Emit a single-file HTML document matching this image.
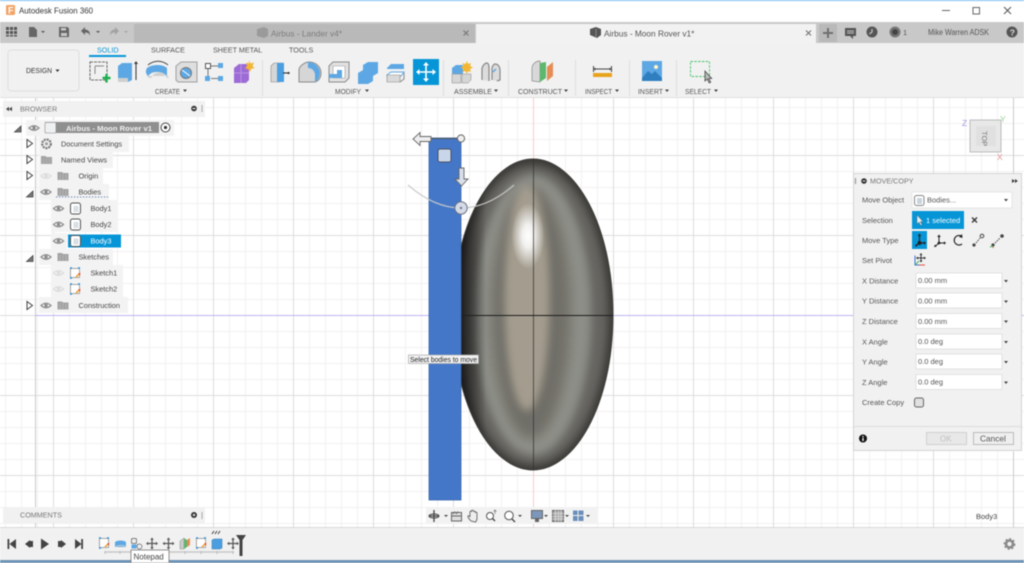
<!DOCTYPE html>
<html><head><meta charset="utf-8"><title>Autodesk Fusion 360</title>
<style>
html,body{margin:0;padding:0;background:#fff;width:1024px;height:563px;overflow:hidden}
svg{display:block;filter:blur(.4px)}
text{font-family:"Liberation Sans",sans-serif;font-size:8px;fill:#555}
</style></head><body>
<svg width="1024" height="563" viewBox="0 0 1024 563" xmlns="http://www.w3.org/2000/svg">
<defs>
<pattern id="minor" x="5" y="11" width="16" height="16" patternUnits="userSpaceOnUse"><path d="M.5 0V16M0 .5H16" stroke="#f3f0f2" fill="none"/></pattern>
<pattern id="major" x="53" y="75" width="80" height="80" patternUnits="userSpaceOnUse"><path d="M.5 0V80M0 .5H80" stroke="#dfdddf" fill="none"/></pattern>
<filter id="b4" x="-30%" y="-30%" width="160%" height="160%"><feGaussianBlur stdDeviation="4"/></filter>
<linearGradient id="eggL" x1="461" x2="486" y1="0" y2="0" gradientUnits="userSpaceOnUse"><stop offset="0" stop-color="#111" stop-opacity=".85"/><stop offset=".5" stop-color="#222" stop-opacity=".55"/><stop offset="1" stop-color="#222" stop-opacity="0"/></linearGradient>
<radialGradient id="hi" cx="528" cy="236" r="30" gradientUnits="userSpaceOnUse" gradientTransform="translate(528 236) scale(.55 1.1) translate(-528 -236)"><stop offset="0" stop-color="#fff"/><stop offset=".35" stop-color="#fff" stop-opacity=".85"/><stop offset="1" stop-color="#fff" stop-opacity="0"/></radialGradient>
<clipPath id="eggClip"><path id="eggP" d="M533 159C575 159 613 225 613 315C613 405 575 470 533 470C491 470 453 405 453 315C453 225 491 159 533 159Z"/></clipPath>
<g id="eye"><path d="M-5 0Q0-4.500 5 0Q0 4.500-5 0Z" fill="none" stroke="#8c8c8c" stroke-width="1.200"/><circle r="1.700" fill="#8c8c8c"/></g>
<g id="eyeoff"><path d="M-5 0Q0-4.500 5 0Q0 4.500-5 0Z" fill="none" stroke="#dcdcdc" stroke-width="1.200"/><circle r="1.700" fill="#dcdcdc"/></g>
<g id="folder"><path d="M-5.500-4H-1L0-3H5.500V4H-5.500Z" fill="#a3a3a3"/><path d="M-3-2V4M0-2V4M3-2V4" stroke="#c2c2c2" stroke-width=".5"/></g>
<g id="body"><rect x="-5" y="-5.500" width="10" height="11" rx="2" fill="#fff" stroke="#555" stroke-width="1"/><rect x="-2" y="-2.500" width="5" height="6" fill="#d9dfe3"/></g>
<g id="sk"><rect x="-4.500" y="-4.500" width="9" height="9" fill="#fff" stroke="#555" stroke-width=".5"/><path d="M-5-5h2M3-5h2M-5 5h2" stroke="#2e90d8" stroke-width="1.400"/><path d="M1 4L4.500 .5" stroke="#f0a030" stroke-width="1.500"/><circle cx="4.500" cy="1" r="1" fill="#e8502f"/></g>
<g id="mv"><path d="M0-5V5M-5 0H5" stroke="#555" stroke-width="1.200"/><path d="M0-6l-1.800 2.200h3.600zM0 6l-1.800-2.200h3.600zM-6 0l2.200-1.800v3.600zM6 0l-2.200-1.800v3.600z" fill="#555"/></g>
</defs>

<!-- title bar -->
<rect width="1024" height="22" fill="#fff"/>
<rect width="1024" height="1" fill="#79bdf0"/>
<rect x="6" y="5" width="9" height="10" rx="1" fill="#f2a365"/><text x="8" y="13.500" style="font-size:9px;font-weight:bold;fill:#fff">F</text>
<text x="19" y="13.500" textLength="74" lengthAdjust="spacingAndGlyphs" style="font-size:8.300px;fill:#333">Autodesk Fusion 360</text>
<path d="M942 10.500h8" stroke="#666"/><rect x="973" y="7.500" width="6.500" height="6.500" fill="none" stroke="#666"/><path d="M1004 7l7 7M1011 7l-7 7" stroke="#555"/>

<!-- tab bar -->
<rect y="22" width="1024" height="21" fill="#c8c8c8"/>
<rect x="134" y="24" width="341" height="19" fill="#b9b9b9"/>
<rect x="476" y="24" width="340" height="20" fill="#f2f2f2"/>
<rect x="819" y="24" width="18" height="18" fill="#b9b9b9"/>
<g fill="#555">
<path d="M6 27h3v3H6zM10 27h3v3h-3zM14 27h3v3h-3zM6 31h3v3H6zM10 31h3v3h-3zM14 31h3v3h-3zM6 35h3v1.500H6zM10 35h3v1.500h-3zM14 35h3v1.500h-3z"/>
<path d="M29 27h5l3 3v7h-8z" fill="#666"/><path d="M41 31h4l-2 2z"/>
<path d="M59 27h8.500l1.500 1.500V37H59z" fill="#666"/><rect x="61" y="28" width="5" height="2.500" fill="#c8c8c8"/><rect x="61" y="33" width="6" height="3" fill="#c8c8c8"/>
<path d="M85 27l-4 4 4 4v-2.500c3 0 4.500 1 5 3.500 .3-4-1.500-6.500-5-6.500z" fill="#666"/><path d="M96 31h4l-2 2z"/>
<path d="M115 27l4 4-4 4v-2.500c-3 0-4.500 1-5 3.500-.3-4 1.500-6.500 5-6.500z" fill="#a3a3a3"/><path d="M124 31h4l-2 2z" fill="#a3a3a3"/>
</g>
<path d="M257 29l7-2 4 2v7l-4 2-7-2z" fill="#9a9a9a"/><text x="271" y="36.500" style="font-size:8.300px;fill:#7d7d7d">Airbus - Lander v4*</text>
<path d="M463.500 30.500l5 5M468.500 30.500l-5 5" stroke="#777" stroke-width="1.200"/>
<path d="M590 29l6-2 5 2v6l-4 3-7-3z" fill="#555"/><path d="M596 29v8" stroke="#888"/>
<text x="604" y="36.500" style="font-size:8.300px;fill:#555">Airbus - Moon Rover v1*</text>
<path d="M806 30.500l5 5M811 30.500l-5 5" stroke="#777" stroke-width="1.200"/>
<path d="M828 28v10M823 33h10" stroke="#707070" stroke-width="2"/>
<path d="M845 28h11v8h-3v3l-3-3h-5z" fill="#555"/><path d="M847 31h7M847 33h7" stroke="#c8c8c8"/>
<circle cx="872" cy="32" r="5.500" fill="#555"/><path d="M872 29v3l-2.500 2" stroke="#c8c8c8" fill="none" stroke-width="1.200"/>
<circle cx="895" cy="32" r="5.500" fill="#777"/><circle cx="895" cy="32" r="3" fill="#444"/>
<text x="903" y="35" style="font-size:7.500px;fill:#555">1</text>
<text x="928" y="35" textLength="61" lengthAdjust="spacingAndGlyphs" style="font-size:7.800px;fill:#555">Mike Warren ADSK</text>
<circle cx="1012" cy="32" r="5.500" fill="#555"/><text x="1009.800" y="35.500" style="font-size:8.500px;font-weight:bold;fill:#ddd">?</text>

<!-- ribbon -->
<rect y="43" width="1024" height="55" fill="#f1f1f1"/>
<rect y="97" width="1024" height="1" fill="#e0e0e0"/>
<rect x="8" y="50" width="71" height="41" rx="3" fill="#f1f1f1" stroke="#dedede"/>
<text x="26" y="73" textLength="26" lengthAdjust="spacingAndGlyphs" style="font-size:7.300px;fill:#333">DESIGN</text><path d="M55.500 69.500h4l-2 2.500z" fill="#333"/>
<text x="97" y="52.500" style="font-size:7.200px;fill:#0696d7">SOLID</text><rect x="89" y="55" width="37" height="2" fill="#0696d7"/>
<text x="151" y="52.500" style="font-size:7.200px">SURFACE</text>
<text x="213" y="52.500" style="font-size:7.200px">SHEET METAL</text>
<text x="289" y="52.500" style="font-size:7.200px">TOOLS</text>
<text x="155" y="94" textLength="25" lengthAdjust="spacingAndGlyphs" style="font-size:7.200px">CREATE</text><path d="M183 89.500h4l-2 2.500z" fill="#444"/>
<text x="335" y="94" textLength="26" lengthAdjust="spacingAndGlyphs" style="font-size:7.200px">MODIFY</text><path d="M365 89.500h4l-2 2.500z" fill="#444"/>
<text x="454" y="94" textLength="38" lengthAdjust="spacingAndGlyphs" style="font-size:7.200px">ASSEMBLE</text><path d="M494 89.500h4l-2 2.500z" fill="#444"/>
<text x="518" y="94" textLength="44" lengthAdjust="spacingAndGlyphs" style="font-size:7.200px">CONSTRUCT</text><path d="M564 89.500h4l-2 2.500z" fill="#444"/>
<text x="585" y="94" textLength="27" lengthAdjust="spacingAndGlyphs" style="font-size:7.200px">INSPECT</text><path d="M615 89.500h4l-2 2.500z" fill="#444"/>
<text x="638" y="94" textLength="25" lengthAdjust="spacingAndGlyphs" style="font-size:7.200px">INSERT</text><path d="M665 89.500h4l-2 2.500z" fill="#444"/>
<text x="685" y="94" textLength="26" lengthAdjust="spacingAndGlyphs" style="font-size:7.200px">SELECT</text><path d="M714 89.500h4l-2 2.500z" fill="#444"/>
<path d="M262.500 60V96M443.500 60V96M508.500 60V96M575.500 60V96M629.500 60V96M676.500 60V96" stroke="#dedede"/>
<!-- create icons -->
<rect x="90" y="62" width="17" height="18" fill="none" stroke="#444" stroke-width=".8" stroke-dasharray="3 1"/>
<path d="M95 66h9M95 66v8" stroke="#888"/><path d="M102.500 78h8M106.500 74v8.500" stroke="#1cae4f" stroke-width="2.400"/>
<path d="M118 66l4-3h10v17l-4 2h-10z" fill="#5da8e4"/><path d="M118 78h10v4h-10z" fill="#cfcfcf"/><path d="M136 80V62m-1.500 2l1.500-2 1.500 2" stroke="#333" fill="none"/>
<path d="M147 68c5-4 16-4 20 0v8c-2-1-3-4-10-4s-7 3-9 4c-2-2-3-5-1-8z" fill="#5da8e4"/><path d="M147 76c1 2 3 2 4 2l3-4c2-2 8-2 10 0l3 4c2 0 1.500-1 1.500-2" fill="#d0d0d0"/><path d="M148 65c6-5 14-5 20 0" stroke="#444" fill="none"/>
<path d="M176 66l5-4h16v20h-19l-2-2z" fill="#dedede" stroke="#a0a0a0"/><circle cx="186" cy="73" r="5.500" fill="#5da8e4" stroke="#777"/><path d="M182 70l8 6" stroke="#fff"/>
<rect x="205.500" y="63.500" width="5" height="5" fill="#fff" stroke="#555"/><rect x="218" y="63" width="5" height="5" fill="#5da8e4"/><rect x="205" y="76" width="5" height="5" fill="#5da8e4"/><rect x="218" y="76" width="5" height="5" fill="#5da8e4"/><path d="M211 66h7M208 69v7M211 78.500h7" stroke="#777"/>
<path d="M234 68l5-4h10v16l-3 3h-12z" fill="#9d6bd6"/><path d="M234 73h15M241 64v19" stroke="#b892e6" stroke-width="1"/><path d="M249 60l1.500 3.500 3.500-1-1.500 3.500 2 2-3.500 1-1 3-2-3-3-.5 2-2.500-1-3.500 3 1z" fill="#f2b632"/>
<!-- modify -->
<path d="M271 66l3-3h9v16l-3 3h-9z" fill="#d6d6d6" stroke="#888" stroke-width=".6"/><path d="M277 63h7v19h-7z" fill="#4b9ee0"/><path d="M283 73h5" stroke="#222"/><path d="M288 71.500l2 1.500-2 1.500z" fill="#222"/>
<path d="M299 82V70c0-4 6-8 10-8 7 0 12 5 12 11s-4 9-7 9z" fill="#d6d6d6" stroke="#8a8a8a"/><path d="M308 62c6 0 12 5 12 11 0 4-2 7-5 9v-7c0-4-3-7-7-7z" fill="#5da8e4"/>
<path d="M329 66l4-4h16v16l-4 4h-16z" fill="#e2e2e2" stroke="#8a8a8a"/><path d="M333 66h12v12h-12z" fill="#fff" stroke="#999" stroke-width=".6"/><path d="M329 74h8v-4h5v8h-13z" fill="#5da8e4"/>
<path d="M358 73l5-3v-5l5-3h10v11l-5 3v5l-5 3h-10z" fill="#5da8e4"/>
<path d="M387 68l4-4h13v5h-17z" fill="#5da8e4"/><path d="M387 75l4-3h13l-3 4h-14z" fill="#fff" stroke="#5da8e4"/><path d="M387 75h13v7h-13z" fill="#d9d9d9" stroke="#888" stroke-width=".6"/><path d="M400 82l4-3v-6" fill="none" stroke="#888"/>
<rect x="413" y="59" width="26" height="26" fill="#0696d7"/><path d="M426 63V81M417 72H435" stroke="#fff" stroke-width="1.600"/><path d="M426 62l-3 3.500h6zM426 82l-3-3.500h6zM416 72l3.500-3v6zM436 72l-3.500-3v6z" fill="#fff"/>
<!-- assemble -->
<path d="M452 68l4-3h7v9h-11z" fill="#5da8e4"/><path d="M452 74h9v9h-9zM462 74h9v6l-3 3h-6z" fill="#d6d6d6" stroke="#888" stroke-width=".5"/><path d="M467 61l1 3 3-1-1 3 3 1.500-3 1.500 1 3-3-1-1 3-1.500-3-3 1 1-3-3-1.500 3-1.500-1-3 3 1z" fill="#f2b632"/>
<path d="M482 80V69c0-3 3-6 5-6 1 0 2 2 2 4v14M492 80V69c0-3 2-5 3-5 3 0 5 3 5 6v10l-3 1" fill="#dcdcdc" stroke="#888" stroke-width="1.200"/><path d="M493 72l3-3" stroke="#5da8e4" stroke-width="1.500"/>
<!-- construct -->
<path d="M532 81V68c0-3 3-7 8-7v21z" fill="#d8d8d8" stroke="#888" stroke-width=".7"/><path d="M540 63l6-1v16l-6 4z" fill="#5cb86c"/><path d="M547 67l6-5v14l-6 5z" fill="#e58d55"/>
<!-- inspect -->
<rect x="593" y="73" width="19" height="4" fill="#e8a31d"/><path d="M593.500 66v6M611.500 66v6M594 69H611" stroke="#444"/><path d="M593.500 69l2-1.500v3zM611.500 69l-2-1.500v3z" fill="#444"/>
<!-- insert -->
<rect x="642" y="61" width="20" height="20" fill="#5da8e4"/><path d="M642 78l6-7 4 3 3-3 7 7v3h-20z" fill="#2f7fc0"/><circle cx="656" cy="67" r="2" fill="#fff6c9"/>
<!-- select -->
<rect x="690.500" y="61.500" width="19" height="15" fill="none" stroke="#46c46a" stroke-width=".9" stroke-dasharray="2.500 1.300"/>
<path d="M705 71v10l2.200-2 2 4 1.500-.8-2-3.700 3 0z" fill="#bbb" stroke="#444" stroke-width=".8"/>

<!-- canvas -->
<rect y="98" width="1024" height="429" fill="#fff"/>
<rect y="98" width="1024" height="429" fill="url(#minor)"/>
<rect y="98" width="1024" height="429" fill="url(#major)"/>
<path d="M35.500 98V527" stroke="#c8c8c8"/>
<path d="M533.500 98V527" stroke="#f8cccc"/>
<path d="M35 315.500H1024" stroke="#bdb4f2"/>
<path d="M1013.500 98V173M1013.500 452V527" stroke="#cccccc"/>

<!-- egg -->
<g clip-path="url(#eggClip)">
<rect x="450" y="155" width="170" height="320" fill="#3a3936"/>
<g filter="url(#b4)">
<ellipse cx="533" cy="315" rx="75" ry="150" fill="#666560"/>
<ellipse cx="533" cy="315" rx="58" ry="140" fill="#8d8e87"/>
<ellipse cx="531" cy="313" rx="42" ry="128" fill="#7c7a72"/>
<ellipse cx="531" cy="313" rx="34" ry="120" fill="#706e67"/>
<ellipse cx="527" cy="298" rx="22" ry="112" fill="#a49d8f"/>
</g>
<rect x="450" y="155" width="40" height="320" fill="url(#eggL)"/>
<rect x="490" y="190" width="80" height="100" fill="url(#hi)"/>
</g>
<use href="#eggP" fill="none" stroke="#3e3e3a" stroke-width=".9"/>
<path d="M533.500 159V470" stroke="#333" stroke-width="1" opacity=".75"/>
<path d="M461 315.500H613" stroke="#1e1e1e" stroke-width="1"/>

<!-- blue body -->
<rect x="429" y="138" width="32" height="362" fill="#4477c8"/>
<rect x="429" y="138" width="32" height="362" fill="none" stroke="#3a66ad" stroke-width=".8"/>
<!-- manipulators -->
<path d="M408 185Q461 231 514 185" fill="none" stroke="#c9c9c9" stroke-width="1.300" opacity=".9"/>
<rect x="438" y="149" width="13" height="13" rx="2" fill="#c9d6ea" stroke="#4a4f63"/>
<path d="M429 138.500h32" stroke="#555"/>
<path d="M431 136.500h-11v-4l-7 6.500 7 6.500v-4h11z" fill="#eee" stroke="#666" stroke-width=".9"/>
<circle cx="461" cy="138.500" r="3.600" fill="#eee" stroke="#666"/>
<path d="M459 168v11h-4l6.500 7 6.500-7h-4v-11z" fill="#d8deea" stroke="#666" stroke-width=".9"/>
<circle cx="461" cy="208" r="6.200" fill="#d4dbe7" stroke="#6a6f80"/><circle cx="461" cy="208" r="1.200" fill="#778"/>
<rect x="408.500" y="355" width="70" height="8.500" fill="#f3f3f3" stroke="#aaa" stroke-width=".7"/>
<text x="410" y="362" textLength="67" lengthAdjust="spacingAndGlyphs" style="font-size:7px;fill:#222">Select bodies to move</text>

<!-- viewcube -->
<rect x="970" y="120" width="31" height="32" fill="#e8e8e8" stroke="#bcbcbc"/><rect x="976" y="126" width="20" height="20" fill="#e0e0e0"/>
<text transform="translate(982 131) rotate(90)" style="font-size:7.500px;fill:#777">TOP</text>
<text x="962" y="126" style="font-size:8.500px;fill:#9a96e8">Z</text><text x="1000" y="122" style="font-size:8.500px;fill:#9ad49a">Y</text><text x="997" y="160" style="font-size:8.500px;fill:#e58f8f">X</text>

<!-- browser -->
<rect x="3" y="101" width="202" height="16" fill="#f1f1f1"/>
<path d="M6 109l3-2.200v4.400zM9 109l3-2.200v4.400z" fill="#444"/><text x="20" y="111.500" style="font-size:7.200px;fill:#777">BROWSER</text>
<circle cx="194" cy="108.500" r="2.800" fill="#333"/><rect x="192.500" y="108" width="3" height="1" fill="#fff"/><path d="M202 105v7" stroke="#aaa"/>
<g fill="#f3f3f3">
<rect x="26" y="120" width="148" height="16"/><rect x="39" y="136" width="90" height="16"/><rect x="39" y="152" width="74" height="16"/><rect x="39" y="168" width="64" height="16"/><rect x="39" y="184" width="70" height="16"/>
<rect x="51" y="200" width="67" height="16"/><rect x="51" y="216" width="67" height="16"/><rect x="51" y="233" width="16" height="16"/>
<rect x="39" y="249" width="74" height="16"/><rect x="51" y="265" width="72" height="16"/><rect x="51" y="281" width="72" height="16"/><rect x="39" y="297" width="89" height="16"/>
</g>
<!-- tree arrows -->
<g fill="#fff" stroke="#444" stroke-width="1">
<path d="M27 139.500v8l5.500-4z"/><path d="M27 155.500v8l5.500-4z"/><path d="M27 171.500v8l5.500-4z"/><path d="M27 301.500v8l5.500-4z"/>
</g>
<g fill="#777" stroke="#444" stroke-width=".8">
<path d="M14.500 132l6.500-6v6z"/><path d="M26.500 197l6.500-6v6z"/><path d="M26.500 261.500l6.500-6v6z"/>
</g>
<use href="#eye" x="34" y="128"/>
<rect x="45" y="122" width="114" height="11" fill="#8f8f8f"/>
<rect x="45" y="122.500" width="11" height="10.500" rx="1" fill="#eef0f2" stroke="#888" stroke-width=".6"/>
<text x="66" y="130.800" textLength="86" lengthAdjust="spacingAndGlyphs" style="font-size:7.600px;font-weight:bold;fill:#f0f0f0">Airbus - Moon Rover v1</text>
<circle cx="165.500" cy="127.500" r="4.500" fill="#fff" stroke="#444"/><circle cx="165.500" cy="127.500" r="1.600" fill="#333"/>
<circle cx="46.500" cy="143.800" r="4.300" fill="none" stroke="#777" stroke-width="2.200" stroke-dasharray="2 .9"/><circle cx="46.500" cy="143.800" r="1.500" fill="#999"/>
<use href="#folder" x="46.500" y="160"/>
<use href="#eyeoff" x="46" y="176"/><use href="#folder" x="63" y="176"/>
<use href="#eye" x="46" y="192"/><use href="#folder" x="63" y="192"/>
<path d="M56 197H108" stroke="#5a78b4" stroke-width="1.100" stroke-dasharray="1.200 1.800"/>
<use href="#eye" x="58.500" y="208.500"/><use href="#body" x="75.500" y="208.500"/>
<use href="#eye" x="58.500" y="224.500"/><use href="#body" x="75.500" y="224.500"/>
<use href="#eye" x="58.500" y="241"/><rect x="68" y="234.500" width="53" height="13" fill="#0696d7"/><use href="#body" x="75.500" y="241"/>
<use href="#eye" x="46" y="257"/><use href="#folder" x="63" y="257"/>
<use href="#eyeoff" x="58.500" y="273"/><use href="#sk" x="75" y="273"/>
<use href="#eyeoff" x="58.500" y="289"/><use href="#sk" x="75" y="289"/>
<use href="#eye" x="46" y="305.500"/><use href="#folder" x="63" y="305.500"/>
<text x="61" y="146.500" textLength="61" lengthAdjust="spacingAndGlyphs" style="font-size:7.400px;fill:#444">Document Settings</text>
<text x="61" y="162.500" textLength="46" lengthAdjust="spacingAndGlyphs" style="font-size:7.400px;fill:#444">Named Views</text>
<text x="78.500" y="178.500" style="font-size:7.400px;fill:#444">Origin</text>
<text x="78.500" y="194.500" style="font-size:7.400px;fill:#444">Bodies</text>
<text x="90.500" y="211" style="font-size:7.400px;fill:#444">Body1</text>
<text x="90.500" y="227" style="font-size:7.400px;fill:#444">Body2</text>
<text x="90.500" y="243.500" style="font-size:7.400px;fill:#fff">Body3</text>
<text x="78.500" y="259.500" style="font-size:7.400px;fill:#444">Sketches</text>
<text x="90.500" y="275.500" style="font-size:7.400px;fill:#444">Sketch1</text>
<text x="90.500" y="291.500" style="font-size:7.400px;fill:#444">Sketch2</text>
<text x="78.500" y="308" style="font-size:7.400px;fill:#444">Construction</text>

<!-- comments -->
<rect x="3" y="507" width="202" height="16" fill="#f1f1f1"/>
<text x="20" y="517.500" style="font-size:7.200px;fill:#777">COMMENTS</text>
<circle cx="194" cy="515" r="3" fill="#333"/><path d="M192.500 515h3M194 513.500v3" stroke="#fff" stroke-width=".7"/><path d="M202 512v7" stroke="#aaa"/>

<!-- nav bar -->
<rect x="426" y="507" width="172" height="17" fill="#f2f2f2"/>
<g fill="#666" stroke="none">
<path d="M434 510v12M429 516h10" stroke="#444" stroke-width="1.300"/><ellipse cx="434" cy="516" rx="5" ry="2" fill="none" stroke="#444"/>
<path d="M444 515h4l-2 2z" fill="#444"/>
<rect x="451.500" y="512.500" width="10" height="8.500" fill="#ddd" stroke="#666"/><path d="M453 514l2-2.500M456 514l2-2.500M451.500 516h10" stroke="#666" fill="none"/>
<path d="M471 521c-2-2-3.500-4-3-5 .5-.8 1.500 0 2 1v-5c0-1.200 1.500-1.200 1.500 0v-1c0-1.200 2-1.200 2 0v1c0-1 2-1 2 0v1c0-1 1.500-1 1.500 0V518c0 2-.5 3-1.500 4z" fill="#eee" stroke="#555" stroke-width=".8"/>
<circle cx="490" cy="516" r="3.500" fill="#fff" stroke="#555"/><path d="M492.500 518.500l2.500 2.500" stroke="#444" stroke-width="1.300"/><path d="M495 510v4M493.500 511.500l1.500-1.500 1.500 1.500" stroke="#777" fill="none" stroke-width=".7"/>
<circle cx="509" cy="515.500" r="4.300" fill="#fff" stroke="#555"/><path d="M512 519l3 3" stroke="#444" stroke-width="1.300"/>
<path d="M518 515h4l-2 2z" fill="#444"/>
<rect x="531.500" y="510.500" width="11" height="8" fill="#7d97ba" stroke="#666"/><rect x="535" y="519" width="4" height="3" fill="#666"/>
<path d="M544 515h4l-2 2z" fill="#444"/>
<rect x="552.500" y="510.500" width="11" height="11" fill="#aaa" stroke="#666"/><path d="M555.500 510v12M558.500 510v12M561 510v12M552 513.500h12M552 516.500h12M552 519h12" stroke="#e8e8e8" stroke-width=".6"/>
<path d="M565 515h4l-2 2z" fill="#444"/>
<rect x="573" y="510.500" width="10.500" height="10.500" fill="#6b8fbb"/><path d="M578 510v11M573 515.500h11" stroke="#eee"/>
<path d="M586 515h4l-2 2z" fill="#444"/>
</g>
<text x="976" y="519" style="font-size:7.500px;fill:#444">Body3</text>

<!-- panel -->
<rect x="853.500" y="173.500" width="168" height="277" fill="#f1f1f1" stroke="#d4d4d4"/>
<path d="M855.500 178v6" stroke="#999" stroke-width="1.200"/>
<circle cx="864" cy="181" r="2.800" fill="#333"/><path d="M862.500 181h3" stroke="#fff" stroke-width=".8"/>
<text x="870" y="183.500" style="font-size:7.200px;fill:#777">MOVE/COPY</text>
<path d="M1012 179l2.800 2-2.800 2zM1015 179l2.800 2-2.800 2z" fill="#333"/>
<text x="862" y="202.500" style="font-size:7.500px">Move Object</text>
<text x="862" y="222.800" style="font-size:7.500px">Selection</text>
<text x="862" y="243" style="font-size:7.500px">Move Type</text>
<text x="862" y="263.200" style="font-size:7.500px">Set Pivot</text>
<text x="862" y="283.500" style="font-size:7.500px">X Distance</text>
<text x="862" y="303.700" style="font-size:7.500px">Y Distance</text>
<text x="862" y="324" style="font-size:7.500px">Z Distance</text>
<text x="862" y="344.300" style="font-size:7.500px">X Angle</text>
<text x="862" y="364.500" style="font-size:7.500px">Y Angle</text>
<text x="862" y="385" style="font-size:7.500px">Z Angle</text>
<text x="862" y="405" style="font-size:7.500px">Create Copy</text>
<rect x="912" y="192" width="100" height="16" fill="#fff" stroke="#e6e6e6"/>
<rect x="914.500" y="195.500" width="9.500" height="10" rx="2" fill="#fff" stroke="#888"/><rect x="917" y="198" width="5" height="6" fill="#c8d4dc"/>
<text x="927" y="202.500" style="font-size:7.500px;fill:#555">Bodies...</text><path d="M1004 199h4l-2 2.500z" fill="#444"/>
<rect x="912" y="211" width="52" height="18" fill="#0696d7"/>
<path d="M917 215v9l2-1.800 1.700 3.300 1.300-.7-1.700-3.200h2.700z" fill="#e8eef2" stroke="#555" stroke-width=".4"/>
<text x="926" y="223" style="font-size:7.500px;fill:#fff">1 selected</text>
<path d="M972 217.500l5 5M977 217.500l-5 5" stroke="#333" stroke-width="1.300"/>
<rect x="912" y="231" width="15" height="18" fill="#0696d7"/>
<path d="M919.500 235v8M919.500 243l-4 3M919.500 243h6" stroke="#222" stroke-width="1.200"/><circle cx="919.500" cy="243" r="2" fill="#222"/><path d="M919.500 233.500l-1.800 2.500h3.600zM926 243l-2-1.800v3.600zM915 246.500l2.600-.4-1.600-2.100z" fill="#222"/>
<path d="M939 236v7M939 243l-4 3.500M939 243h6" stroke="#222"/><circle cx="939" cy="243" r="1.400" fill="#222"/><path d="M939 234.500l-1.800 2.500h3.600zM946 243l-2-1.800v3.600zM934 247l2.600-.4-1.600-2.100z" fill="#222"/>
<path d="M962 236.500a4.800 4.800 0 1 0 0 7.500" fill="none" stroke="#222" stroke-width="1.200"/><path d="M962 234l.5 4-3.500-1z" fill="#222"/>
<circle cx="974" cy="245" r="1.600" fill="#444"/><circle cx="982" cy="236" r="1.800" fill="none" stroke="#444"/><path d="M976 243l4-5" stroke="#444" stroke-dasharray="1.500 1"/>
<circle cx="993" cy="245" r="1.600" fill="#444"/><circle cx="1002" cy="236" r="1.800" fill="#444"/><path d="M995 243l5-5" stroke="#444" stroke-dasharray="1.500 1"/><path d="M993 246v2" stroke="#e5534b"/><path d="M990 247l3-1" stroke="#3cb55e"/>
<path d="M915 255.500v9.500h10" stroke="#3d6fd6" fill="none"/><path d="M915 265l4-4" stroke="#3cb55e"/><path d="M919 265h6" stroke="#e5534b"/>
<path d="M921 254.500v7M917.500 258h7" stroke="#333"/><path d="M921 253l-1.500 2h3zM921 262.500l-1.500-2h3zM916 258l2-1.500v3zM926 258l-2-1.500v3z" fill="#333"/>
<g fill="#fff" stroke="#e2e2e2">
<rect x="916" y="273" width="86" height="15"/><rect x="916" y="293" width="86" height="15"/><rect x="916" y="313.500" width="86" height="15"/><rect x="916" y="334" width="86" height="15"/><rect x="916" y="354" width="86" height="15"/><rect x="916" y="374.500" width="86" height="15"/>
</g>
<text x="918" y="283.200" style="font-size:7.500px;fill:#555">0.00 mm</text>
<text x="918" y="303.500" style="font-size:7.500px;fill:#555">0.00 mm</text>
<text x="918" y="323.800" style="font-size:7.500px;fill:#555">0.00 mm</text>
<text x="918" y="344" style="font-size:7.500px;fill:#555">0.0 deg</text>
<text x="918" y="364.200" style="font-size:7.500px;fill:#555">0.0 deg</text>
<text x="918" y="384.500" style="font-size:7.500px;fill:#555">0.0 deg</text>
<path d="M1004 280h4l-2 2.500zM1004 300.500h4l-2 2.500zM1004 320.500h4l-2 2.500zM1004 341h4l-2 2.500zM1004 361h4l-2 2.500zM1004 381.500h4l-2 2.500z" fill="#444"/>
<rect x="914.500" y="398" width="9" height="9" rx="2" fill="#e0e0e0" stroke="#666"/>
<path d="M854 426.500H1021" stroke="#dcdcdc"/>
<circle cx="863" cy="438.500" r="4" fill="#111"/><rect x="862.300" y="436" width="1.400" height="1.300" fill="#fff"/><rect x="862.300" y="438" width="1.400" height="3" fill="#fff"/>
<rect x="926.500" y="432.500" width="40" height="12" fill="#e8e8e8" stroke="#d0d0d0"/><text x="940" y="441.500" style="font-size:8px;fill:#c0c0c0">OK</text>
<rect x="973.500" y="432.500" width="40" height="12" fill="#efefef" stroke="#bbb"/><text x="980" y="441.500" style="font-size:8.300px;fill:#555">Cancel</text>

<!-- timeline -->
<rect y="527" width="1024" height="36" fill="#f1f1f1"/><rect y="527" width="1024" height="1" fill="#d8d8d8"/>
<rect y="560" width="1024" height="3" fill="#6f93b5"/>
<g fill="#444">
<path d="M7.500 539h1.800v10H7.500zM16 539v10l-6.500-5z"/>
<path d="M25 544l5-4v8zM30 541h3v6h-3z"/>
<path d="M41 538.500v11l8-5.500z"/>
<path d="M66 544l-5-4v8zM58 541h3v6h-3z"/>
<path d="M83 539h-1.800v10H83zM75 539v10l6.500-5z"/>
</g>
<path d="M105 552H234" stroke="#c8c8c8" stroke-width="1.500"/>
<path d="M105 551v3M120 551v3M136 551v3M152 551v3M168 551v3M185 551v3M201 551v3M217 551v3M233 551v3" stroke="#bbb"/>
<use href="#sk" x="104" y="543"/>
<path d="M115 542c2-2 9-2 11 0v5h-11z" fill="#5da8e4"/><path d="M116 547c1-2 9-2 10 0" stroke="#ccc" fill="none"/>
<rect x="131.500" y="538.500" width="5" height="5" rx="1" fill="#eee" stroke="#555" stroke-width=".7"/><rect x="131.500" y="544.500" width="5" height="4" fill="#5da8e4"/><rect x="137" y="544" width="3" height="3" fill="#5da8e4"/><circle cx="139.500" cy="546.500" r="2.500" fill="#eee" stroke="#666" stroke-width=".7"/>
<use href="#mv" x="152" y="543.500"/><use href="#mv" x="168.500" y="543.500"/>
<path d="M180 549v-8l4-3v11z" fill="#ccc" stroke="#888" stroke-width=".5"/><path d="M184 538v11l3-2v-7z" fill="#5cb86c"/><path d="M187 547l3-2v-7l-3 2z" fill="#e58d55"/>
<use href="#sk" x="201" y="543"/>
<path d="M212 540l2-1h8v9l-2 1h-8z" fill="#4b9ee0" stroke="#3676a8" stroke-width=".5"/>
<path d="M212 534l2-3M215 534l2-3M218 534l2-3" stroke="#333" stroke-width=".9"/>
<use href="#mv" x="233" y="543.500"/>
<path d="M236 535h10l-3.500 5v16h-3v-16z" fill="#444"/>
<rect x="131" y="550" width="38" height="13" fill="#fff" stroke="#777" stroke-width=".8"/>
<text x="133.500" y="559.500" style="font-size:8px;fill:#444">Notepad</text>
<circle cx="1009.500" cy="544" r="3.500" fill="none" stroke="#8a8a8a" stroke-width="2.600"/><circle cx="1009.500" cy="544" r="5.200" fill="none" stroke="#8a8a8a" stroke-width="1.400" stroke-dasharray="2 2"/>
</svg>
</body></html>
